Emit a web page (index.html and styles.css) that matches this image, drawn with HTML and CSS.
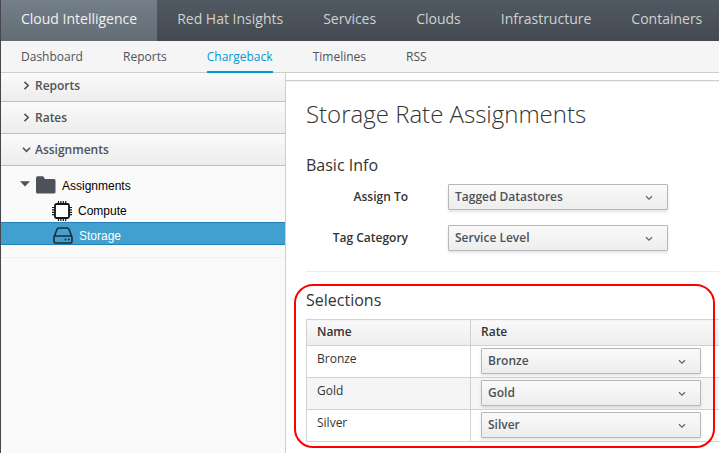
FILE: index.html
```html
<!DOCTYPE html>
<html lang="en">
<head>
<meta charset="utf-8">
<title>Storage Rate Assignments</title>
<link rel="stylesheet" href="styles.css">
</head>
<body>
<div class="app">
  <nav class="primary">
    <a class="active">Cloud Intelligence</a><a>Red Hat Insights</a><a>Services</a><a>Clouds</a><a>Infrastructure</a><a>Containers</a>
  </nav>
  <nav class="secondary">
    <a>Dashboard</a><a>Reports</a><a class="active">Chargeback</a><a>Timelines</a><a>RSS</a>
  </nav>
  <div class="columns">
    <aside class="sidebar">
      <div class="panel first"><svg class="angle" viewBox="0 0 8 8"><path d="M2.2 .8 5.5 4 2.2 7.2"/></svg>Reports</div>
      <div class="panel"><svg class="angle" viewBox="0 0 8 8"><path d="M2.2 .8 5.5 4 2.2 7.2"/></svg>Rates</div>
      <div class="panel"><svg class="angle" viewBox="0 0 8 8"><path d="M.8 2.5 4 5.7 7.2 2.5"/></svg>Assignments</div>
      <div class="tree">
        <div class="node root">
          <svg class="caret" viewBox="0 0 10 6"><path d="M0 .3h10L5 5.5z"/></svg>
          <svg class="folder" viewBox="0 0 20 18"><path d="M0 2.2Q0 .3 1.6 .3H6.600Q8 .3 8.300 1.800L8.800 3H18Q19.500 3 19.500 4.500V16Q19.500 17.500 18 17.500H1.500Q0 17.500 0 16z"/></svg>
          <span>Assignments</span>
        </div>
        <div class="node child">
          <svg class="chip" viewBox="0 0 20 20"><rect x="3" y="3" width="14" height="14" rx="1.5" fill="#fff" stroke="#151515" stroke-width="1.8"/><path d="M6.500 0v3M8.900 0v3M11.300 0v3M13.700 0v3M6.500 17v3M8.900 17v3M11.300 17v3M13.700 17v3M0 6.500h3M0 8.900h3M0 11.300h3M0 13.700h3M17 6.500h3M17 8.900h3M17 11.300h3M17 13.700h3" stroke="#151515" stroke-width="1.200"/></svg>
          <span>Compute</span>
        </div>
        <div class="node child selected">
          <svg class="disk" viewBox="0 0 20 17"><path d="M1 10 4 2.300Q4.500 1 6 1H14Q15.500 1 16 2.300L19 10V14.500Q19 16 17.500 16H2.500Q1 16 1 14.500V10Q1 9 2.500 9H17.500Q19 9 19 10" fill="none" stroke="#1d2b33" stroke-width="1.600" stroke-linejoin="round"/><circle cx="12.500" cy="12.500" r=".9"/><circle cx="15.800" cy="12.500" r=".9"/></svg>
          <span>Storage</span>
        </div>
      </div>
    </aside>
    <main>
      <div class="toolbar"></div>
      <h1>Storage Rate Assignments</h1>
      <h3>Basic Info</h3>
      <div class="field"><label>Assign To</label><button class="select">Tagged Datastores<svg viewBox="0 0 8 6"><path d="M1 1.300 4 4.200 7 1.300"/></svg></button></div>
      <div class="field"><label>Tag Category</label><button class="select">Service Level<svg viewBox="0 0 8 6"><path d="M1 1.300 4 4.200 7 1.300"/></svg></button></div>
      <hr>
      <section class="selections">
        <h3>Selections</h3>
        <table>
          <thead><tr><th class="name">Name</th><th>Rate</th></tr></thead>
          <tbody>
            <tr><td>Bronze</td><td class="rate"><button class="select">Bronze<svg viewBox="0 0 8 6"><path d="M1 1.300 4 4.200 7 1.300"/></svg></button></td></tr>
            <tr><td>Gold</td><td class="rate"><button class="select">Gold<svg viewBox="0 0 8 6"><path d="M1 1.300 4 4.200 7 1.300"/></svg></button></td></tr>
            <tr><td>Silver</td><td class="rate"><button class="select">Silver<svg viewBox="0 0 8 6"><path d="M1 1.300 4 4.200 7 1.300"/></svg></button></td></tr>
          </tbody>
        </table>
        <div class="highlight"></div>
      </section>
    </main>
  </div>
</div>
</body>
</html>
```
FILE: styles.css
```css
* { box-sizing: border-box; }
body {
  margin: 0;
  font: 12px/20px "Open Sans", sans-serif;
  color: #333;
  background: #fff;
}
.app {
  display: flex;
  flex-direction: column;
  height: 453px;
  overflow: hidden;
  border-left: 1px solid #46474a;
}
.primary {
  display: flex;
  flex: none;
  height: 41px;
  background: linear-gradient(#505962, #434950);
  font-size: 14px;
  line-height: 38px;
  color: #d1d1d1;
}
.primary a { padding: 0 20px; white-space: nowrap; }
.primary a.active {
  color: #f1f1f1;
  background: linear-gradient(#737e88, #636d76);
}
.secondary {
  display: flex;
  flex: none;
  gap: 40.1px;
  height: 32px;
  padding-left: 20px;
  background: #f5f5f5;
  border-bottom: 1px solid #cecece;
  line-height: 31px;
  color: #4d5258;
}
.secondary a { height: 32px; white-space: nowrap; }
.secondary a.active {
  color: #0099d3;
  border-bottom: 2px solid #0099d3;
}
.columns { display: flex; flex: 1; min-height: 0; }
.sidebar {
  flex: none;
  width: 285px;
  background: #fafafa;
  border-right: 1px solid #cecece;
}
.panel {
  display: flex;
  align-items: center;
  gap: 4px;
  height: 32px;
  padding: 1px 0 0 21px;
  border-bottom: 1px solid #bfbfbf;
  background: linear-gradient(#fafafa, #ededed);
  font-weight: 600;
  color: #4d5258;
}
.panel.first { height: 29px; padding: 0 0 2px 21px; }
.angle { width: 9px; height: 9px; margin-bottom: 1px; fill: none; stroke: #4d5258; stroke-width: 1.4; }
.tree {
  height: 92px;
  padding-top: 6px;
  border-bottom: 1px solid #f0f0f0;
  font-family: "Liberation Sans", Arial, sans-serif;
  font-size: 12px;
  color: #000;
}
.node { display: flex; align-items: center; height: 25px; }
.root { padding-left: 19px; height: 26px; }
.root span { margin-top: 2px; }
.caret { width: 10px; height: 6px; margin: 0 6px 3px 0; fill: #4d5258; }
.folder { width: 20px; height: 18px; margin: 0 6px 1px 0; fill: #4d5258; }
.child { padding-left: 51px; }
.chip { width: 20px; height: 20px; margin-right: 6px; }
.disk { width: 20px; height: 17px; margin: 4px 6px 0 1px; fill: #1d2b33; }
.selected {
  height: 23px;
  margin-top: -1px;
  color: #fff;
  background: #41a0d0;
  border-top: 1px solid #2580b8;
  border-bottom: 1px solid #2580b8;
}
.selected span { margin-top: 5px; }
main { flex: 1; min-width: 0; padding-left: 20px; }
.toolbar { height: 8px; margin-left: -20px; border-bottom: 1px solid #cecece; box-shadow: 0 1px #f1f1f1; }
h1, h3 { margin: 0; font-weight: 400; }
h1 { margin-top: 17px; font-size: 24px; line-height: 32px; font-weight: 300; }
h3 { font-size: 16px; line-height: 22px; }
h1 + h3 { margin: 24px 0 8px; }
.field { display: flex; gap: 40px; height: 41px; }
label { width: 102px; line-height: 26px; text-align: right; font-weight: 600; }
.select {
  display: flex;
  align-items: center;
  justify-content: space-between;
  width: 220px;
  height: 26px;
  margin: 0;
  padding: 0 14px 1px 6px;
  border: 1px solid #b7b7b7;
  border-radius: 1px;
  background: linear-gradient(#fafafa, #ededed);
  box-shadow: 0 2px 3px rgba(3, 3, 3, .1);
  font: 600 12px/20px "Open Sans", sans-serif;
  color: #4d5258;
}
.select svg { width: 8px; height: 6px; margin-top: 3px; fill: none; stroke: #5d646b; stroke-width: 1.2; }
hr { margin: 5px 0 17px; border: 0; border-top: 1px solid #ededed; }
.selections { position: relative; }
.selections h3 { margin-bottom: 8px; }
table { width: 440px; border-collapse: collapse; table-layout: fixed; }
th, td { height: 32px; padding: 3px 10px; border: 1px solid #d1d1d1; text-align: left; vertical-align: top; }
th { height: 26px; padding: 2px 10px; font-weight: 600; background: linear-gradient(#fafafa, #ededed); }
.name { width: 164px; }
tbody tr:nth-child(even) { background: #f5f5f5; }
td.rate { padding: 2px 10px; }
.highlight {
  position: absolute;
  left: -12px;
  top: -5px;
  width: 421px;
  height: 164px;
  border: 2px solid #f00;
  border-radius: 19px;
}
```
